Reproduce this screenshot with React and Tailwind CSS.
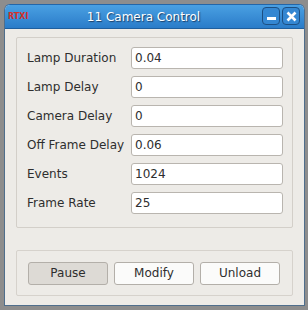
import React from 'react'

const fields = [
  { label: 'Lamp Duration', value: '0.04' },
  { label: 'Lamp Delay', value: '0' },
  { label: 'Camera Delay', value: '0' },
  { label: 'Off Frame Delay', value: '0.06' },
  { label: 'Events', value: '1024' },
  { label: 'Frame Rate', value: '25' },
]

const font = { fontFamily: '"DejaVu Sans", sans-serif' }

const App = () => {
  return (
    <div className="w-[308px] h-[310px] bg-[#8d8d8d] pt-[4px] pl-[4px]" style={font}>
      <div className="w-[301px] h-[302px] flex flex-col bg-[#edebe7] rounded-t-[6px] border border-[#4f6e8c] border-t-[#2466a8] overflow-hidden">
        {/* barre de titre */}
        <div className="h-[24px] shrink-0 relative flex items-center justify-center pr-[22px] bg-gradient-to-b from-[#4aa0e2] to-[#2a7cc9] border-b border-[#1f5f9e]">
          <span className="absolute left-[3px] top-[8px] text-[8px] font-bold text-[#d3302a] leading-none">RTXI</span>
          <span className="text-[12px] text-white leading-none [text-shadow:1px_1px_1px_#1c3f66]">11 Camera Control</span>
          <div className="absolute right-[4px] top-[2px] flex gap-[2px]">
            <div className="w-[18px] h-[18px] rounded-[4px] border border-[#1d4f82] bg-[#3487d2] flex items-end justify-center pb-[4px]">
              <div className="w-[9px] h-[3px] bg-white"></div>
            </div>
            <div className="w-[18px] h-[18px] rounded-[4px] border border-[#1d4f82] bg-[#3487d2] flex items-center justify-center">
              <svg width="11" height="11" viewBox="0 0 11 11">
                <path d="M1.5 1.5 L9.5 9.5 M9.5 1.5 L1.5 9.5" stroke="white" strokeWidth="2.6" />
              </svg>
            </div>
          </div>
        </div>

        <div className="flex-1 flex flex-col px-[11px] pt-[8px]">
          {/* champs */}
          <div className="h-[191px] border border-[#d3cfc9] rounded-[2px] pl-[10px] pr-[9px] pt-[9px] flex flex-col gap-[7px]">
            {fields.map((f) => (
              <div key={f.label} className="flex items-center h-[22px]">
                <span className="w-[104px] whitespace-nowrap text-[12px] text-[#2e2e2e]">{f.label}</span>
                <div className="flex-1 h-[22px] bg-white border border-[#b9b5af] rounded-[3px] flex items-center px-[3px] text-[12px] text-[#2e2e2e]">
                  {f.value}
                </div>
              </div>
            ))}
          </div>

          {/* boutons */}
          <div className="mt-[22px] h-[46px] border border-[#d6d2cc] rounded-[2px] flex items-center pl-[11px] gap-[6px]">
            <button className="w-[80px] h-[23px] rounded-[3px] border border-[#b3afa9] bg-[#dddad5] text-[12px] text-[#2e2e2e]">Pause</button>
            <button className="w-[80px] h-[23px] rounded-[3px] border border-[#b3afa9] bg-[#fbfbfa] text-[12px] text-[#2e2e2e]">Modify</button>
            <button className="w-[80px] h-[23px] rounded-[3px] border border-[#b3afa9] bg-[#fbfbfa] text-[12px] text-[#2e2e2e]">Unload</button>
          </div>
        </div>
      </div>
    </div>
  )
}

export default App
